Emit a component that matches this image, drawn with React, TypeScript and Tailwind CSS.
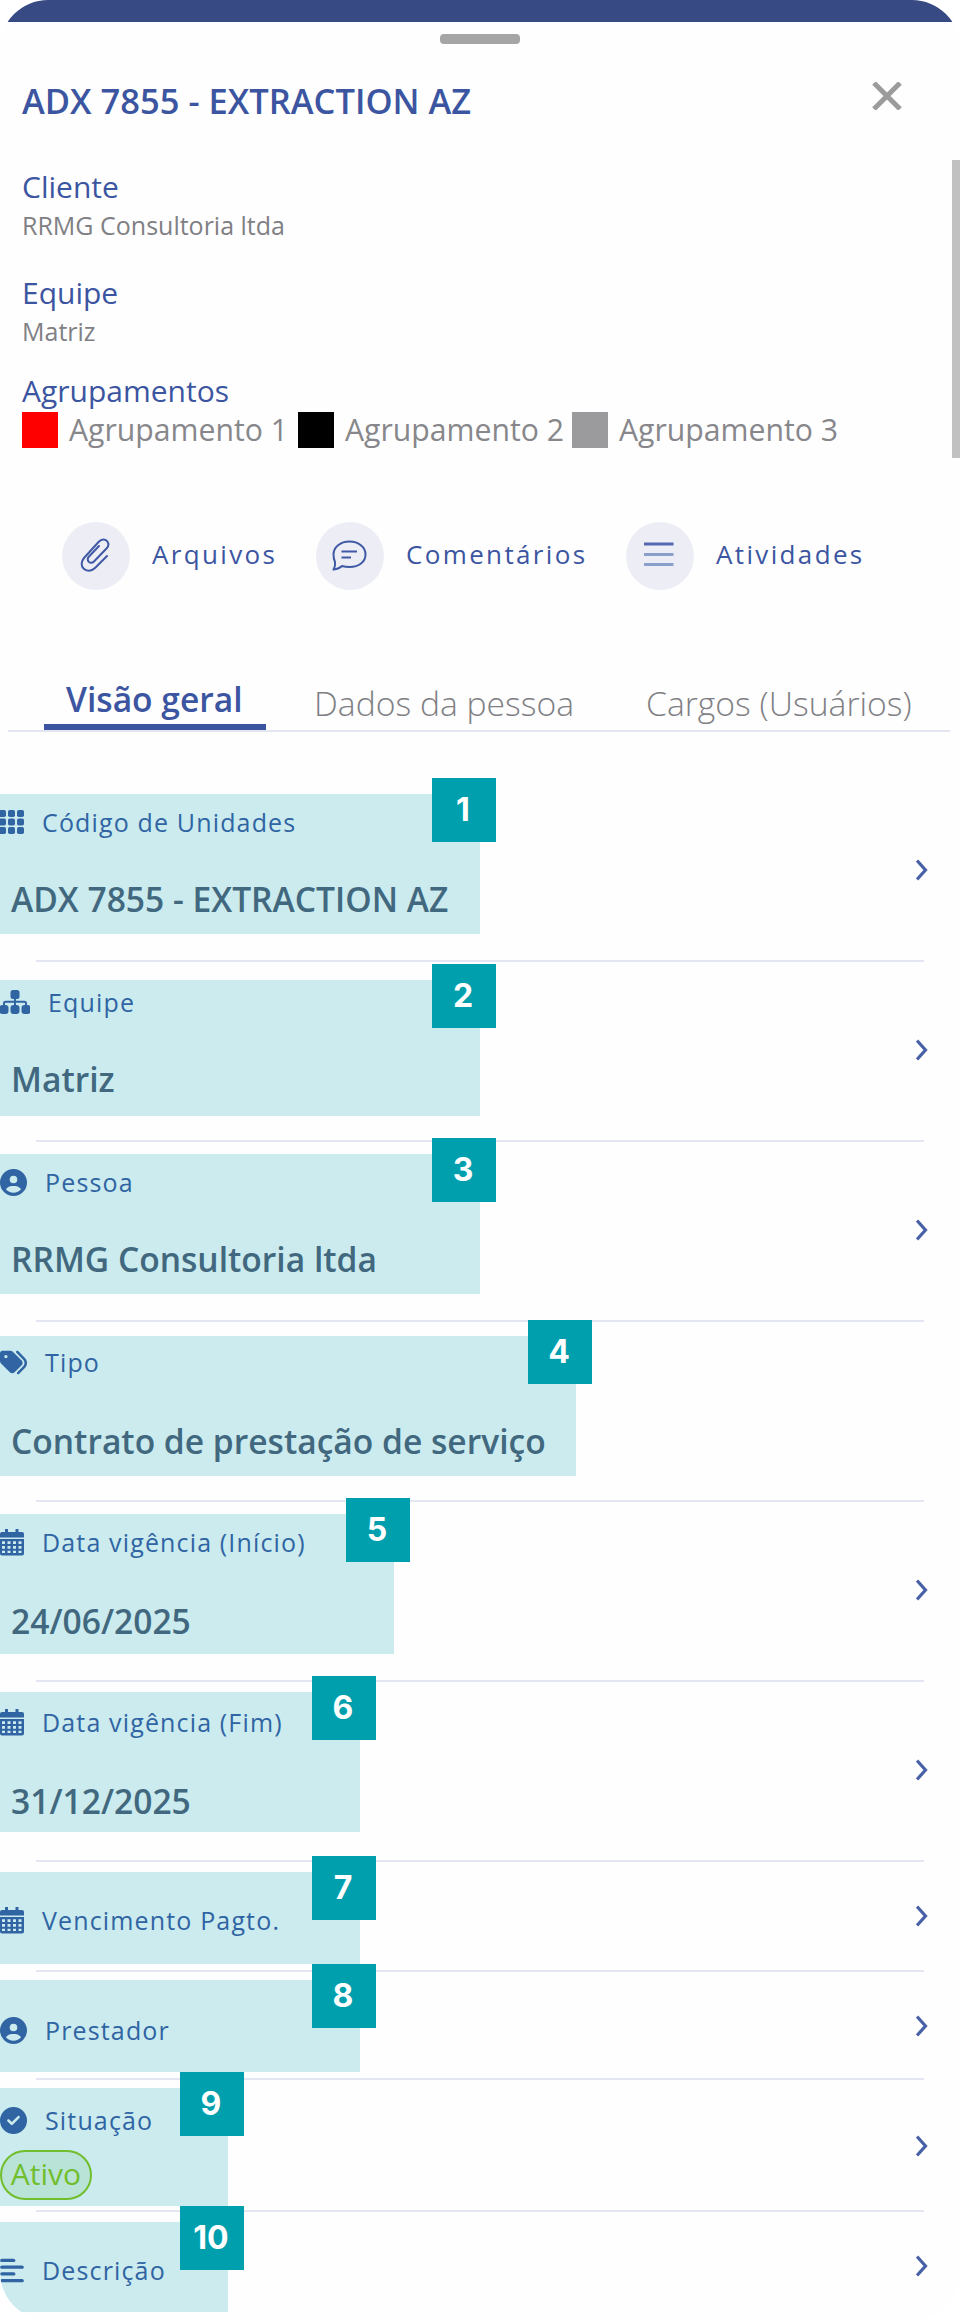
import type { ReactNode } from "react";
import { FaAlignLeft, FaCircleCheck, FaCircleUser, FaTags } from "react-icons/fa6";

const groups = [
  { name: "Agrupamento 1", swatch: "bg-[#ff0000]", width: "w-[276px]" },
  { name: "Agrupamento 2", swatch: "bg-black", width: "w-[274px]" },
  { name: "Agrupamento 3", swatch: "bg-[#9b9b9d]", width: "w-[280px]" },
];

function GridIcon() {
  return (
    <svg viewBox="0 0 24 24" className="h-6 w-6" fill="currentColor">
      {[0, 8.5, 17].map((y) =>
        [-1, 8, 17].map((x) => <rect key={`${x}-${y}`} x={x} y={y} width="7" height="7" rx="1.8" />)
      )}
    </svg>
  );
}

function TeamIcon() {
  return (
    <svg viewBox="0 0 30 24" className="h-6 w-[30px]" fill="currentColor">
      <rect x="10.5" y="0" width="9" height="9" rx="2.500" />
      {[-0.5, 10.5, 21.5].map((x) => (
        <rect key={x} x={x} y="15" width="9" height="9" rx="3" />
      ))}
      <path d="M15 8V16M4 16V13.500Q4 11.800 5.700 11.800H24.300Q26 11.800 26 13.500V16" fill="none" stroke="currentColor" strokeWidth="2" />
    </svg>
  );
}

function CalendarIcon() {
  return (
    <svg viewBox="0 0 24 27" className="h-[27px] w-6" fill="currentColor">
      <path d="M5 0H8V3H15.500V0H18.500V3H22Q24 3 24 5V8.500H0V5Q0 3 2 3H5Z" />
      <path
        fillRule="evenodd"
        d="M0 10H24V24.500Q24 26.500 22 26.500H2Q0 26.500 0 24.500ZM2 12.300V15H5V12.300ZM7.500 12.300V15H10.500V12.300ZM13 12.300V15H16V12.300ZM18.500 12.300V15H21.500V12.300ZM2 17V19.700H5V17ZM7.500 17V19.700H10.500V17ZM13 17V19.700H16V17ZM18.500 17V19.700H21.500V17ZM2 21.700V24H5V21.700ZM7.500 21.700V24H10.500V21.700ZM13 21.700V24H16V21.700ZM18.500 21.700V24H21.500V21.700Z"
      />
    </svg>
  );
}

function ClipIcon() {
  return (
    <svg viewBox="0 0 30 34" className="mr-0.5 mb-0.5 h-[34px] w-[30px]" fill="none" stroke="currentColor" strokeWidth="2" strokeLinecap="round">
      <path d="M27 18 15 30C11 34 6 33 3.5 30.500C1 28 1 23.500 4 20L19 3.500C21.500 .8 25 .8 27 3C29 5.500 28.500 8.500 26.500 10.500L14 23.500C12 25.500 9.500 25 8.500 23.500C7.300 21.500 8 19.500 9 18.500L19 8" />
    </svg>
  );
}

function ChatIcon() {
  return (
    <svg viewBox="0 0 35 31" className="mr-0.5 mb-0.5 h-[31px] w-[35px]" fill="none" stroke="currentColor" strokeWidth="2" strokeLinejoin="round">
      <path d="M1.500 29.500C3 27 3.500 25 3 22C1.800 19.500 1.500 17 1.500 14.500C1.500 7 8.500 1.500 17.500 1.500S33.500 7 33.500 14.500S27 27 17.500 27C14.500 27 12 26.600 10 26C8 28 5 29 1.500 29.500Z" />
      <path d="M9.500 11.500H25M9.500 17.500H19" />
    </svg>
  );
}

function ListIcon() {
  return (
    <svg viewBox="0 0 30 26" className="mr-0.5 mb-1 h-[26px] w-[30px]" fill="none" strokeWidth="3">
      <path d="M0 3H29.500" stroke="#5468b0" />
      <path d="M0 13.500H29.500M0 23.500H29.500" stroke="#8a9fc9" />
    </svg>
  );
}

const actions = [
  { label: "Arquivos", icon: <ClipIcon />, width: "w-[254px]" },
  { label: "Comentários", icon: <ChatIcon />, width: "w-[310px]" },
  { label: "Atividades", icon: <ListIcon />, width: "w-[270px]" },
];

type Row = {
  n: number;
  icon: ReactNode;
  label: string;
  value?: string;
  status?: string;
  row: string;
  pad: string;
  valueGap?: string;
  mark: string;
  arrow?: string;
};

const rows: Row[] = [
  { n: 1, icon: <GridIcon />, label: "Código de Unidades", value: "ADX 7855 - EXTRACTION AZ", row: "h-[180px]", pad: "pt-5", valueGap: "mt-[33px]", mark: "top-3 h-[140px] w-[480px]", arrow: "mb-[3px]" },
  { n: 2, icon: <TeamIcon />, label: "Equipe", value: "Matriz", row: "h-[180px]", pad: "pt-5", valueGap: "mt-[33px]", mark: "top-[18px] h-[136px] w-[480px]", arrow: "mb-[3px]" },
  { n: 3, icon: <FaCircleUser className="size-[27px]" />, label: "Pessoa", value: "RRMG Consultoria ltda", row: "h-[180px]", pad: "pt-5", valueGap: "mt-[33px]", mark: "top-3 h-[140px] w-[480px]", arrow: "mb-[3px]" },
  { n: 4, icon: <FaTags className="size-[27px]" />, label: "Tipo", value: "Contrato de prestação de serviço", row: "h-[180px]", pad: "pt-5", valueGap: "mt-[35px]", mark: "top-3.5 h-[140px] w-[576px]" },
  { n: 5, icon: <CalendarIcon />, label: "Data vigência (Início)", value: "24/06/2025", row: "h-[180px]", pad: "pt-5", valueGap: "mt-[35px]", mark: "top-3 h-[140px] w-[394px]", arrow: "mb-[3px]" },
  { n: 6, icon: <CalendarIcon />, label: "Data vigência (Fim)", value: "31/12/2025", row: "h-[180px]", pad: "pt-5", valueGap: "mt-[35px]", mark: "top-2.5 h-[140px] w-[360px]", arrow: "mb-[3px]" },
  { n: 7, icon: <CalendarIcon />, label: "Vencimento Pagto.", row: "h-[110px]", pad: "pt-[38px]", mark: "top-2.5 h-[92px] w-[360px]", arrow: "mb-0" },
  { n: 8, icon: <FaCircleUser className="size-[27px]" />, label: "Prestador", row: "h-[108px]", pad: "pt-[38px]", mark: "top-2 h-[92px] w-[360px]", arrow: "mt-px" },
  { n: 9, icon: <FaCircleCheck className="size-[27px]" />, label: "Situação", status: "Ativo", row: "h-[132px]", pad: "pt-5", mark: "top-2 h-[118px] w-[228px]", arrow: "mt-px" },
  { n: 10, icon: <FaAlignLeft className="h-[27px] w-6" />, label: "Descrição", row: "h-[108px]", pad: "pt-[38px]", mark: "top-2.5 h-[90px] w-[228px]", arrow: "mb-0" },
];

function DetailRow({ item, last }: { item: Row; last: boolean }) {
  return (
    <div className={`relative flex flex-col ${item.row}`}>
      <div className="flex flex-1 items-start justify-between pr-8">
        <div className={item.pad}>
          <div className="flex h-10 items-center gap-[18px] text-[25px] leading-10 tracking-[1.15px] text-[#3c55a1]">
            {item.icon}
            <span>{item.label}</span>
          </div>
          {item.value && (
            <div className={`h-12 pl-[11px] text-[33.6px] leading-[48px] font-semibold text-[#525b73] ${item.valueGap}`}>
              {item.value}
            </div>
          )}
          {item.status && (
            <div className="mt-2.5 flex h-[50px] w-[92px] justify-center rounded-full border-2 border-[#8ec60c] bg-[#b8dea0]/30 text-[30px] leading-[43px] font-medium text-[#8ec60c]">
              {item.status}
            </div>
          )}
        </div>
        {item.arrow && (
          <svg viewBox="0 0 12 22" className={`h-[22px] w-3 self-center ${item.arrow}`} fill="none" stroke="#4860a8" strokeWidth="3.200">
            <path d="M1 1.500 9.500 11 1 20.500" />
          </svg>
        )}
      </div>
      {!last && <div className="mx-9 h-0.5 bg-[#e3e6f1]" />}
      {/* numbered highlight over the field */}
      <div className={`absolute left-0 bg-[#009fae]/20 ${item.mark}`}>
        <span className="absolute -top-4 -right-4 flex size-16 items-center justify-center bg-[#009fae] pr-0.5 font-['Inter',sans-serif] text-[32px] font-bold text-white">
          {item.n}
        </span>
      </div>
    </div>
  );
}

export default function App() {
  return (
    <div className="relative h-[2320px] w-[960px] overflow-hidden rounded-[48px] bg-[#fefefe] font-['Open_Sans',sans-serif]">
      <div className="h-[22px] bg-[#384a84]" />
      <div className="mx-auto mt-3 h-2.5 w-20 rounded bg-[#a5a5a5]" />

      <header className="mt-8 flex h-[50px] items-center justify-between pr-[58px] pl-[22px]">
        <h1 className="text-[34.5px] leading-[50px] font-semibold text-[#3c55a1]">ADX 7855 - EXTRACTION AZ</h1>
        <svg viewBox="0 0 30 28" className="mb-[11px] h-7 w-[30px]" fill="none" stroke="#9b9b9b" strokeWidth="5">
          <path d="M2 1 28 27M28 1 2 27" />
        </svg>
      </header>

      <section className="pt-[41px] pl-[22px] text-[#3c55a1]">
        <h2 className="text-[30px] leading-10">Cliente</h2>
        <p className="mt-0.5 text-[25px] leading-8 text-[#808084]">RRMG Consultoria ltda</p>
        <h2 className="mt-8 text-[30px] leading-10">Equipe</h2>
        <p className="mt-0.5 text-[25px] leading-8 text-[#808084]">Matriz</p>
      </section>

      <section className="pt-6 pl-[22px]">
        <h2 className="text-[30px] leading-10 text-[#3c55a1]">Agrupamentos</h2>
        <div className="mt-px flex">
          {groups.map((group) => (
            <div key={group.name} className={`flex items-center gap-[11px] ${group.width}`}>
              <span className={`size-9 ${group.swatch}`} />
              <span className="text-[30.2px] leading-9 text-[#87878b]">{group.name}</span>
            </div>
          ))}
        </div>
      </section>

      <div className="mt-[74px] flex pl-[62px]">
        {actions.map((action) => (
          <div key={action.label} className={`flex items-center gap-[22px] ${action.width}`}>
            <span className="flex size-[68px] shrink-0 items-center justify-center rounded-full bg-[#ededf6] text-[#3f59a4]">
              {action.icon}
            </span>
            <span className="pb-1 text-[26px] leading-9 tracking-[2.35px] text-[#3c55a1]">{action.label}</span>
          </div>
        ))}
      </div>

      <nav className="mr-2.5 ml-2 mt-[84px] flex h-[58px] border-b-2 border-[#e3e6f1] pl-9">
        <div className="h-14 w-[222px] border-b-[6px] border-[#3c55a1] pl-[22px] text-[33.6px] leading-[50px] font-semibold text-[#3c55a1]">
          Visão geral
        </div>
        <div className="w-[332px] pl-12 text-[33.7px] leading-[58px] font-light text-[#808084]">Dados da pessoa</div>
        <div className="pl-12 text-[33.7px] leading-[58px] font-light text-[#808084]">Cargos (Usuários)</div>
      </nav>

      <main className="mt-[50px]">
        {rows.map((item) => (
          <DetailRow key={item.n} item={item} last={item.n === rows.length} />
        ))}
      </main>

      {/* scrollbar thumb */}
      <div className="absolute top-40 right-0 h-[298px] w-2 bg-[#c1c1c1]" />
    </div>
  );
}
